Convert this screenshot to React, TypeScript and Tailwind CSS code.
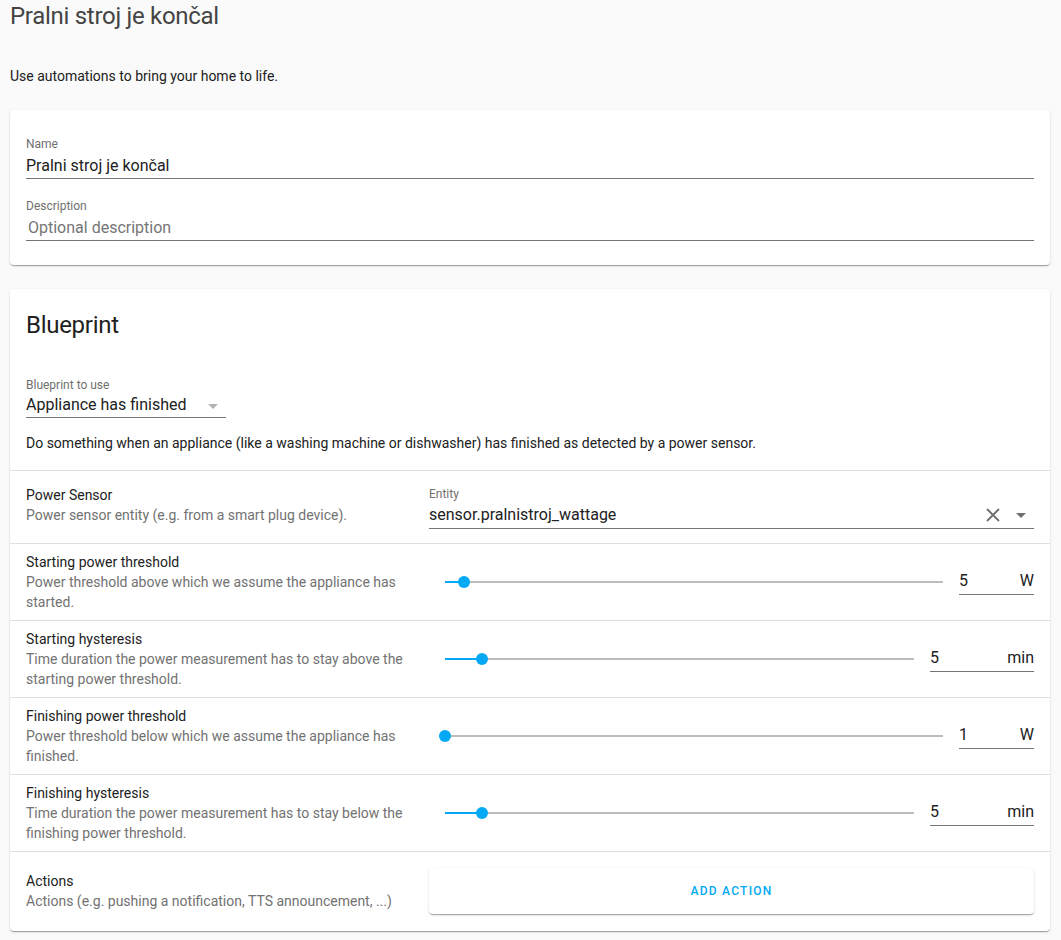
import React from "react";

const card =
  "bg-white rounded-[4px] shadow-[0_2px_1px_-1px_rgba(0,0,0,0.2),0_1px_1px_0_rgba(0,0,0,0.14),0_1px_3px_0_rgba(0,0,0,0.12)]";

interface SliderRow {
  title: string;
  desc: string;
  value: string;
  unit: string;
  pct: number;
  inputW: string;
}

const sliders: SliderRow[] = [
  {
    title: "Starting power threshold",
    desc: "Power threshold above which we assume the appliance has started.",
    value: "5",
    unit: "W",
    pct: 3.8,
    inputW: "w-[75px]",
  },
  {
    title: "Starting hysteresis",
    desc: "Time duration the power measurement has to stay above the starting power threshold.",
    value: "5",
    unit: "min",
    pct: 7.9,
    inputW: "w-[104px]",
  },
  {
    title: "Finishing power threshold",
    desc: "Power threshold below which we assume the appliance has finished.",
    value: "1",
    unit: "W",
    pct: 0,
    inputW: "w-[75px]",
  },
  {
    title: "Finishing hysteresis",
    desc: "Time duration the power measurement has to stay below the finishing power threshold.",
    value: "5",
    unit: "min",
    pct: 7.9,
    inputW: "w-[104px]",
  },
];

function Caret({ color }: { color: string }) {
  return (
    <svg width="10" height="5" viewBox="0 0 10 5">
      <path d="M0 0 L10 0 L5 5 Z" fill={color} />
    </svg>
  );
}

function RowText({ title, desc }: { title: string; desc: string }) {
  return (
    <div className="w-[387px] shrink-0 text-[14px] leading-[20px]">
      <div className="text-[#212121]">{title}</div>
      <div className="text-[#727272]">{desc}</div>
    </div>
  );
}

export default function App() {
  return (
    <div className="min-h-screen bg-[#fafafa] pl-[10px] pr-[11px] pb-[9px] font-['Roboto',sans-serif]">
      {/* Header */}
      <h1 className="text-[24px] leading-[32px] tracking-[-0.012em] text-[#444444]">
        Pralni stroj je končal
      </h1>
      <p className="mt-[34px] text-[14px] leading-[20px] text-[#212121]">
        Use automations to bring your home to life.
      </p>

      {/* Name / description */}
      <div className={`${card} mt-[24px] px-4 pt-[26px] pb-[24px]`}>
        <div className="text-[12px] leading-[16px] text-[#6f6f6f]">Name</div>
        <div className="border-b border-[#757575] pt-[2px] text-[16px] leading-[24px] text-[#212121]">
          Pralni stroj je končal
        </div>
        <div className="mt-[19px] text-[12px] leading-[16px] text-[#6f6f6f]">Description</div>
        <div className="border-b border-[#757575] pl-[2px] pt-[2px] text-[16px] leading-[24px] text-[#757575]">
          Optional description
        </div>
      </div>

      {/* Blueprint */}
      <div className={`${card} mt-[24px]`}>
        <div className="px-4 pt-[20px] pb-[17px]">
          <h2 className="text-[24px] leading-[32px] tracking-[-0.012em] text-[#212121]">Blueprint</h2>
          <div className="mt-[36px] text-[12px] leading-[16px] text-[#6f6f6f]">Blueprint to use</div>
          <div className="flex w-[200px] items-center justify-between border-b border-[#757575] text-[16px] leading-[24px] text-[#212121]">
            <span>Appliance has finished</span>
            <span className="mr-[8px] mt-[2px]">
              <Caret color="#b3b3b3" />
            </span>
          </div>
          <p className="mt-[15px] text-[14px] leading-[20px] text-[#212121]">
            Do something when an appliance (like a washing machine or dishwasher) has finished as
            detected by a power sensor.
          </p>
        </div>

        {/* Power sensor */}
        <div className="flex items-start gap-4 border-t border-[#e0e0e0] px-4 py-[14px]">
          <RowText title="Power Sensor" desc="Power sensor entity (e.g. from a smart plug device)." />
          <div className="flex-1 pt-px">
            <div className="text-[12px] leading-[16px] text-[#6f6f6f]">Entity</div>
            <div className="mt-px flex items-center border-b border-[#757575] pb-px text-[16px] leading-[24px] text-[#212121]">
              <span className="flex-1">sensor.pralnistroj_wattage</span>
              <svg width="14" height="14" viewBox="0 0 14 14" className="mr-[16px]">
                <path d="M1 1 L13 13 M13 1 L1 13" stroke="#6f6f6f" strokeWidth="1.8" />
              </svg>
              <span className="mr-[8px]">
                <Caret color="#6f6f6f" />
              </span>
            </div>
          </div>
        </div>

        {/* Slider rows */}
        {sliders.map((s) => (
          <div
            key={s.title}
            className="flex items-center gap-4 border-t border-[#e0e0e0] px-4 py-[8px]"
          >
            <RowText title={s.title} desc={s.desc} />
            <div className="flex flex-1 items-center">
              <div className="relative mx-4 h-[2px] flex-1 bg-[#bdbdbd]">
                <div
                  className="absolute left-0 top-0 h-[2px] bg-[#03a9f4]"
                  style={{ width: `${s.pct}%` }}
                />
                <div
                  className="absolute top-[-5px] ml-[-6px] h-[12px] w-[12px] rounded-full bg-[#03a9f4]"
                  style={{ left: `${s.pct}%` }}
                />
              </div>
              <div
                className={`${s.inputW} flex items-center justify-between border-b border-[#757575] pb-px text-[16px] leading-[24px] text-[#212121]`}
              >
                <span>{s.value}</span>
                <span>{s.unit}</span>
              </div>
            </div>
          </div>
        ))}

        {/* Actions */}
        <div className="flex items-center gap-4 border-t border-[#e0e0e0] px-4 pt-4 pb-[17px]">
          <RowText title="Actions" desc="Actions (e.g. pushing a notification, TTS announcement, ...)" />
          <button
            className={`${card} flex h-[46px] flex-1 items-center justify-center text-[12px] font-medium uppercase tracking-[1.25px] text-[#03a9f4]`}
          >
            Add action
          </button>
        </div>
      </div>
    </div>
  );
}
